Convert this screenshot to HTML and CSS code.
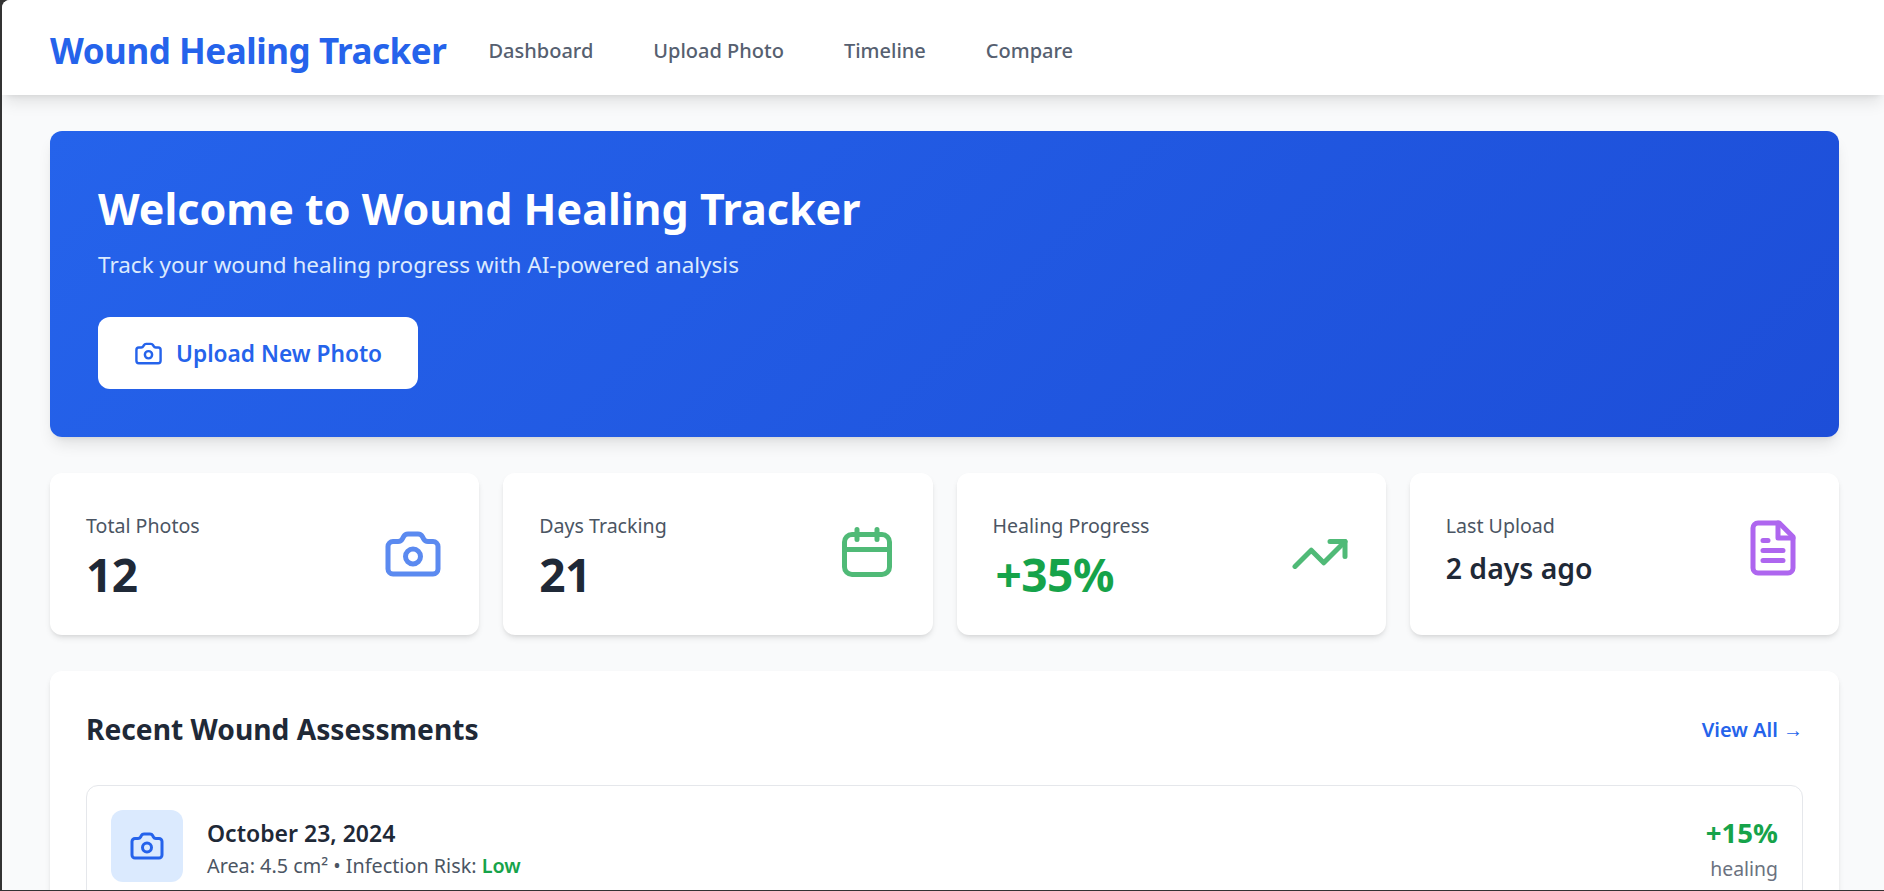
FILE: index.html
```html
<!DOCTYPE html>
<html lang="en">
<head>
<meta charset="utf-8">
<title>Wound Healing Tracker</title>
<link rel="stylesheet" href="styles.css">
</head>
<body>
<div class="window">
  <nav class="nav">
    <a class="logo">Wound Healing Tracker</a>
    <div class="nav-links">
      <a class="nav-link">Dashboard</a>
      <a class="nav-link">Upload Photo</a>
      <a class="nav-link">Timeline</a>
      <a class="nav-link">Compare</a>
    </div>
  </nav>
  <main class="main">
    <section class="hero">
      <h1 class="hero-title">Welcome to Wound Healing Tracker</h1>
      <p class="hero-sub">Track your wound healing progress with AI-powered analysis</p>
      <button class="hero-btn">
        <svg class="btn-icon" viewBox="0 0 24 24"><path d="M13.997 4a2 2 0 0 1 1.76 1.05l.486.9A2 2 0 0 0 18.003 7H20a2 2 0 0 1 2 2v9a2 2 0 0 1-2 2H4a2 2 0 0 1-2-2V9a2 2 0 0 1 2-2h1.997a2 2 0 0 0 1.759-1.048l.489-.904A2 2 0 0 1 10.004 4z"/><circle cx="12" cy="13" r="3"/></svg>
        <span class="btn-label">Upload New Photo</span>
      </button>
    </section>
    <section class="stats">
      <div class="stat">
        <div class="stat-row">
          <div><div class="stat-label">Total Photos</div><div class="stat-value">12</div></div>
          <svg class="stat-icon blue" viewBox="0 0 24 24"><path d="M13.997 4a2 2 0 0 1 1.76 1.05l.486.9A2 2 0 0 0 18.003 7H20a2 2 0 0 1 2 2v9a2 2 0 0 1-2 2H4a2 2 0 0 1-2-2V9a2 2 0 0 1 2-2h1.997a2 2 0 0 0 1.759-1.048l.489-.904A2 2 0 0 1 10.004 4z"/><circle cx="12" cy="13" r="3"/></svg>
        </div>
      </div>
      <div class="stat">
        <div class="stat-row">
          <div><div class="stat-label">Days Tracking</div><div class="stat-value">21</div></div>
          <svg class="stat-icon green" viewBox="0 0 24 24"><rect x="3" y="4.200" width="18" height="16" rx="3"/><path d="M8 2.200v4M16 2.200v4M3 10.200h18"/></svg>
        </div>
      </div>
      <div class="stat">
        <div class="stat-row">
          <div><div class="stat-label">Healing Progress</div><div class="stat-value positive">+35%</div></div>
          <svg class="stat-icon green" viewBox="0 0 24 24"><path d="M22 7l-8.500 8.500-5-5L2 17"/><path d="M16 7h6v6"/></svg>
        </div>
      </div>
      <div class="stat">
        <div class="stat-row">
          <div><div class="stat-label">Last Upload</div><div class="stat-value small">2 days ago</div></div>
          <svg class="stat-icon purple" viewBox="0 0 24 24"><path d="M14.500 2H6a2 2 0 0 0-2 2v16a2 2 0 0 0 2 2h12a2 2 0 0 0 2-2V7.500L14.500 2z"/><path d="M14 2v6h6M16 13H8M16 17H8M10 9H8"/></svg>
        </div>
      </div>
    </section>
    <section class="panel">
      <div class="panel-head">
        <h2 class="panel-title">Recent Wound Assessments</h2>
        <a class="view-all">View All <span class="arrow">→</span></a>
      </div>
      <div class="item">
        <div class="thumb"><svg class="thumb-icon" viewBox="0 0 24 24"><path d="M13.997 4a2 2 0 0 1 1.76 1.05l.486.9A2 2 0 0 0 18.003 7H20a2 2 0 0 1 2 2v9a2 2 0 0 1-2 2H4a2 2 0 0 1-2-2V9a2 2 0 0 1 2-2h1.997a2 2 0 0 0 1.759-1.048l.489-.904A2 2 0 0 1 10.004 4z"/><circle cx="12" cy="13" r="3"/></svg></div>
        <div class="item-body">
          <div class="item-date">October 23, 2024</div>
          <div class="item-meta">Area: 4.5 cm² • Infection Risk: <span class="low">Low</span></div>
        </div>
        <div class="item-side">
          <div class="item-delta">+15%</div>
          <div class="item-note">healing</div>
        </div>
      </div>
    </section>
  </main>
</div>
</body>
</html>
```
FILE: styles.css
```css
* { box-sizing: border-box; margin: 0; padding: 0; }
html, body { height: 100%; overflow: hidden; }
body { background: #333; padding: 0 0 1px 2px; font-family: "Noto Sans", "Open Sans", sans-serif; color: #1f2937; }
.window { height: 890px; background: #f9fafb; border-top-left-radius: 8px; overflow: hidden; }
.nav { height: 95px; background: #fff; padding: 5px 48px 0; display: flex; align-items: center; box-shadow: 0 10px 15px -3px rgba(0,0,0,.1), 0 4px 6px -4px rgba(0,0,0,.1); position: relative; }
.logo { font-size: 35px; font-weight: 700; color: #2563eb; letter-spacing: -.45px; }
.nav-links { display: flex; gap: 60px; margin-left: 42px; }
.nav-link { font-size: 20px; font-weight: 500; color: #566070; }
.main { padding: 36px 45px 0 48px; }
.hero { background: linear-gradient(135deg, #2563eb, #1d4ed8); border-radius: 12px; padding: 48px; color: #fff; box-shadow: 0 10px 15px -3px rgba(0,0,0,.1), 0 4px 6px -4px rgba(0,0,0,.1); }
.hero-title { font-size: 43px; font-weight: 700; line-height: 60px; }
.hero-sub { font-size: 22.5px; line-height: 30px; margin-top: 11px; color: #dbeafe; }
.hero-btn { display: flex; align-items: center; gap: 13px; margin-top: 37px; height: 72px; width: 320px; padding: 0 36px; border: 0; background: #fff; border-radius: 12px; color: #2563eb; font: 600 22.7px "Noto Sans", sans-serif; }
.btn-label { white-space: nowrap; }
.btn-icon { width: 29px; height: 29px; flex: none; fill: none; stroke: #2563eb; stroke-width: 2; stroke-linecap: round; stroke-linejoin: round; }
.stats { display: grid; grid-template-columns: repeat(4, 1fr); gap: 24px; margin-top: 36px; }
.stat { height: 162px; background: #fff; border-radius: 12px; padding: 36px; box-shadow: 0 4px 6px -1px rgba(0,0,0,.1), 0 2px 4px -2px rgba(0,0,0,.1); }
.stat-row { display: flex; justify-content: space-between; align-items: center; }
.stat-label { font-size: 19.6px; line-height: 28px; padding-top: 3px; color: #4b5563; }
.stat-value { font-size: 46px; line-height: 50px; margin-top: 9px; font-weight: 700; letter-spacing: -.5px; color: #1f2937; }
.stat-value.positive { color: #16a34a; padding-left: 3px; }
.stat-value.small { font-size: 28.4px; font-weight: 600; line-height: 38px; letter-spacing: 0; }
.stat-icon { width: 60px; height: 60px; fill: none; stroke-width: 2; stroke-linecap: round; stroke-linejoin: round; opacity: .75; flex: none; }
.blue { stroke: #2563eb; }
.green { stroke: #16a34a; }
.purple { stroke: #9333ea; }
.panel { margin-top: 36px; background: #fff; border-radius: 12px; padding: 36px; height: 400px; box-shadow: 0 4px 6px -1px rgba(0,0,0,.1), 0 2px 4px -2px rgba(0,0,0,.1); }
.panel-head { display: flex; justify-content: space-between; align-items: center; height: 42px; padding-top: 2px; }
.panel-title { font-size: 28.2px; font-weight: 700; }
.view-all { font-size: 20px; font-weight: 600; color: #2563eb; }
.arrow { font-family: "Liberation Sans", sans-serif; font-weight: 400; }
.item { display: flex; align-items: flex-start; margin-top: 36px; padding: 24px; border: 1px solid #e5e7eb; border-radius: 12px; gap: 24px; }
.thumb { width: 72px; height: 72px; flex: none; background: #dbeafe; border-radius: 12px; display: flex; align-items: center; justify-content: center; }
.thumb-icon { width: 36px; height: 36px; fill: none; stroke: #2563eb; stroke-width: 2; stroke-linecap: round; stroke-linejoin: round; }
.item-body { flex: 1; padding-top: 8px; }
.item-date { font-size: 23px; font-weight: 600; line-height: 30px; }
.item-meta { font-size: 19.8px; line-height: 30px; margin-top: 3px; color: #4b5563; }
.low { color: #16a34a; font-weight: 600; }
.item-side { text-align: right; padding-top: 6px; }
.item-delta { font-size: 27.6px; font-weight: 700; color: #16a34a; line-height: 32px; }
.item-note { font-size: 19.4px; color: #6b7280; line-height: 30px; margin-top: 6px; }
```
